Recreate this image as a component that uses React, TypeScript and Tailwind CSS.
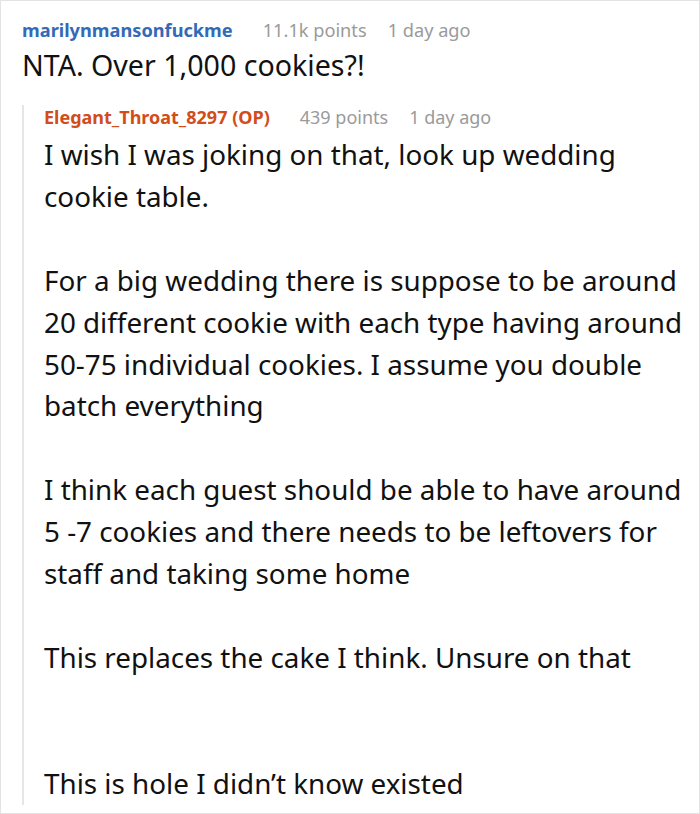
import React from 'react';

const font = { fontFamily: '"Noto Sans", "Open Sans", sans-serif' };

const replyText = `I wish I was joking on that, look up wedding cookie table.

For a big wedding there is suppose to be around 20 different cookie with each type having around 50-75 individual cookies. I assume you double batch everything

I think each guest should be able to have around 5 -7 cookies and there needs to be leftovers for staff and taking some home

This replaces the cake I think. Unsure on that


This is hole I didn\u2019t know existed`;

const Meta: React.FC<{ name: string; color: string; points: string; time: string; size: string }> = ({ name, color, points, time, size }) => (
  <div className={`flex items-baseline leading-[24px] whitespace-nowrap ${size}`}>
    <span className={`font-bold ${color}`}>{name}</span>
    <span className="ml-[30px] text-[#9a9a9a]">{points}</span>
    <span className="ml-[21px] text-[#9a9a9a]">{time}</span>
  </div>
);

export default function App() {
  return (
    <div style={font} className="w-[700px] h-[814px] overflow-hidden bg-white border border-[#e3e3e3] text-[#111]">
      <div className="pl-[21px] pt-[17px]">
        <Meta name="marilynmansonfuckme" color="text-[#336ab7]" points="11.1k points" time="1 day ago" size="text-[18.2px]" />
        <p className="mt-[6px] text-[28.6px] leading-[34px] whitespace-nowrap">NTA. Over 1,000 cookies?!</p>

        <div className="mt-[23px] border-l-2 border-[#e6e6e6] pl-[20px]">
          <Meta name="Elegant_Throat_8297 (OP)" color="text-[#d14d1a]" points="439 points" time="1 day ago" size="text-[18px]" />
          <p className="mt-[5px] w-[656px] text-[27.8px] leading-[41.9px] whitespace-pre-line">{replyText}</p>
        </div>
      </div>
    </div>
  );
}
